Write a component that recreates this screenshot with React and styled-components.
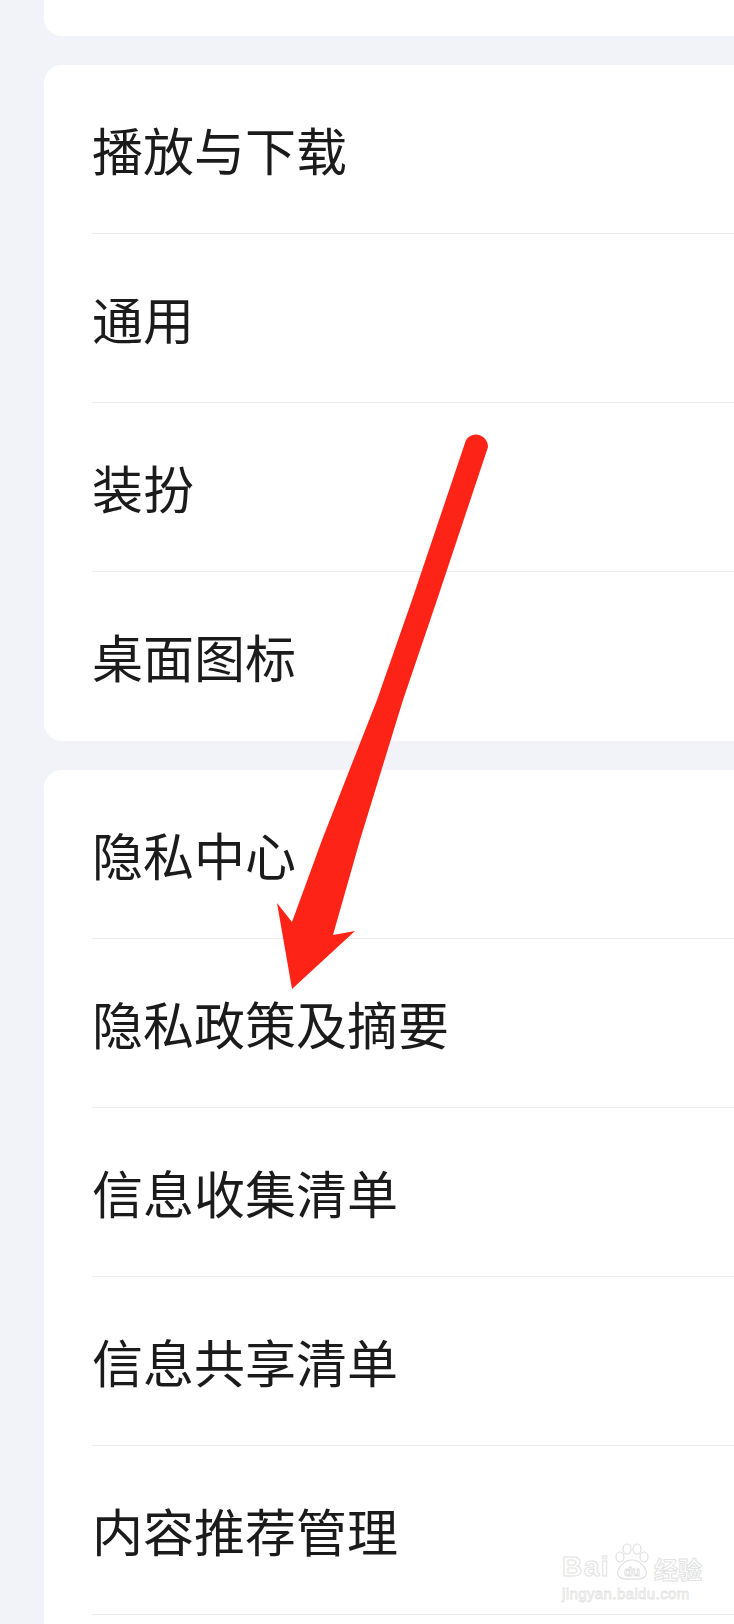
import React from "react";
import styled, { createGlobalStyle } from "styled-components";

const GlobalStyle = createGlobalStyle`
  html, body {
    margin: 0;
    padding: 0;
    background: #f1f3f8;
  }
  body {
    font-family: "Noto Sans CJK SC", "Noto Sans", sans-serif;
    overflow: hidden;
  }
`;

const Page = styled.div`
  position: relative;
  width: 734px;
  height: 1624px;
  overflow: hidden;
  box-sizing: border-box;
  padding-left: 44px;
  display: flex;
  flex-direction: column;
  gap: 29px;
  background: #f1f3f8;
`;

const Card = styled.div`
  flex-shrink: 0;
  flex-grow: ${(p) => (p.$open ? 1 : 0)};
  background: #ffffff;
  margin-right: -40px;
  border-radius: ${(p) => (p.$open ? "18px 18px 0 0" : "18px")};
  ${(p) => p.$cut && `height: 36px; border-radius: 0 0 18px 18px;`}

  & > div:last-child {
    border-bottom-color: ${(p) => (p.$open ? "#ececec" : "transparent")};
  }
`;

const Row = styled.div`
  display: flex;
  align-items: center;
  height: 169px;
  box-sizing: border-box;
  margin-left: 48px;
  border-bottom: 1px solid #ececec;
  font-size: 51px;
  line-height: 1;
  color: #1b1b1b;
  font-weight: 400;
`;

const Overlay = styled.svg`
  position: absolute;
  left: 0;
  top: 0;
  pointer-events: none;
`;

const Watermark = styled.div`
  position: absolute;
  left: 562px;
  top: 1543px;
  display: flex;
  flex-direction: column;
  align-items: flex-start;
  pointer-events: none;
`;

const MarkLine = styled.div`
  display: flex;
  align-items: flex-end;
  gap: 2px;
`;

const MarkText = styled.span`
  font-family: ${(p) => (p.$cjk ? '"Noto Sans CJK SC", sans-serif' : '"Liberation Sans", Arial, sans-serif')};
  font-size: ${(p) => p.$size}px;
  font-weight: 700;
  line-height: 1;
  color: #ffffff;
  -webkit-text-stroke: 1px #e2e2e2;
  letter-spacing: ${(p) => (p.$cjk ? "0" : "1.5px")};
`;

const MarkUrl = styled.span`
  font-family: "Liberation Sans", Arial, sans-serif;
  font-size: 15px;
  line-height: 1;
  margin-top: 5px;
  color: #ffffff;
  -webkit-text-stroke: 0.8px #e4e4e4;
  letter-spacing: 0.4px;
`;

const Paw = () => (
  <svg width="40" height="38" viewBox="0 0 40 38">
    <g fill="#fff" stroke="#e0e0e0" strokeWidth="1.2">
      <ellipse cx="8" cy="14" rx="4" ry="5" />
      <ellipse cx="15" cy="6" rx="4" ry="5" />
      <ellipse cx="25" cy="6" rx="4" ry="5" />
      <ellipse cx="32" cy="14" rx="4" ry="5" />
      <path d="M20 17 C 28 17, 36 26, 34 32 C 32 37, 26 36, 20 36 C 14 36, 8 37, 6 32 C 4 26, 12 17, 20 17 Z" />
    </g>
    <text x="20" y="33" textAnchor="middle" fontFamily="Liberation Sans, Arial, sans-serif" fontSize="13" fontWeight="700" fill="#fff" stroke="#dcdcdc" strokeWidth="0.8">
      du
    </text>
  </svg>
);

const groupOne = ["播放与下载", "通用", "装扮", "桌面图标"];
const groupTwo = ["隐私中心", "隐私政策及摘要", "信息收集清单", "信息共享清单", "内容推荐管理"];

export default function App() {
  return (
    <>
      <GlobalStyle />
      <Page>
        <Card $cut />
        <Card>
          {groupOne.map((label) => (
            <Row key={label}>{label}</Row>
          ))}
        </Card>
        <Card $open>
          {groupTwo.map((label) => (
            <Row key={label}>{label}</Row>
          ))}
        </Card>

        <Overlay width="734" height="1624" viewBox="0 0 734 1624">
          <path
            d="M 466 440 L 412 600 L 377 700 L 322 840 L 292 922 L 277 903 L 292 989 L 355 931 L 333 935 L 360 840 L 403 700 L 437 600 L 488 447 A 12 12 0 0 0 466 440 Z"
            fill="#fe2317"
          />
        </Overlay>

        <Watermark>
          <MarkLine>
            <MarkText $size={28}>Bai</MarkText>
            <Paw />
            <MarkText $cjk $size={24}>经验</MarkText>
          </MarkLine>
          <MarkUrl>jingyan.baidu.com</MarkUrl>
        </Watermark>
      </Page>
    </>
  );
}
